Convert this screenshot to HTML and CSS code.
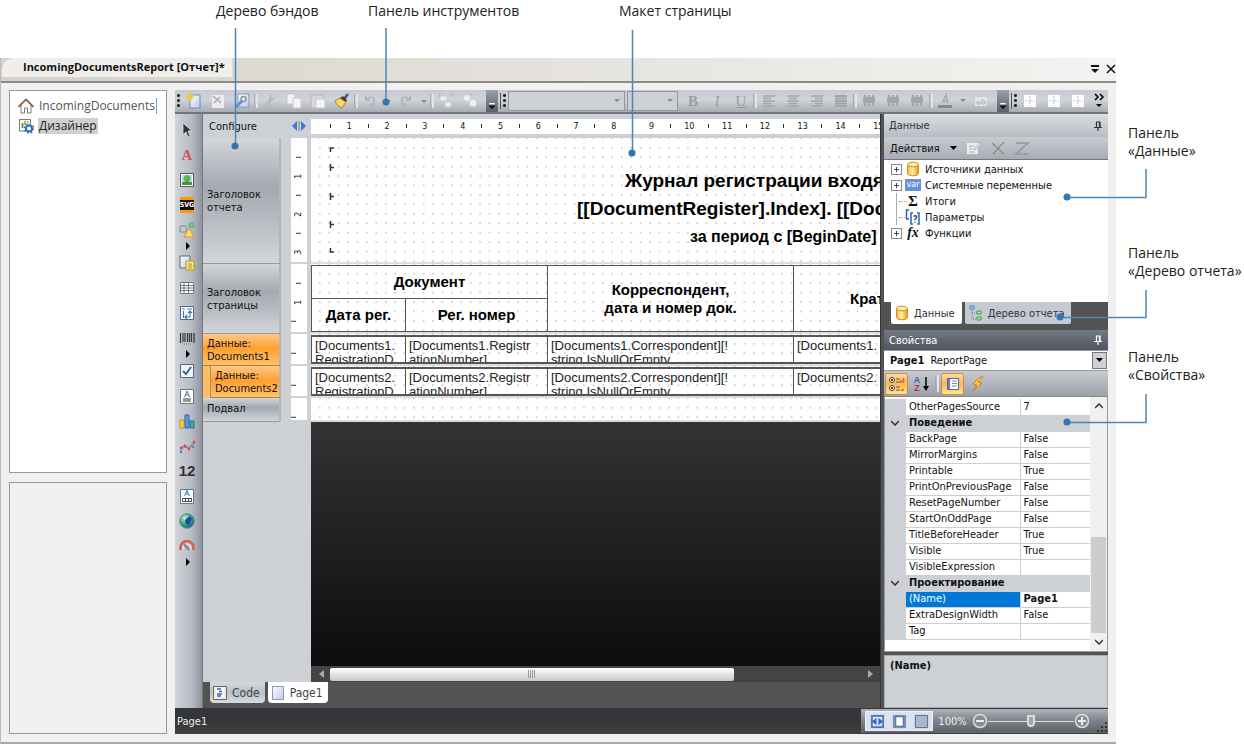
FILE: index.html
```html
<!DOCTYPE html>
<html lang="ru">
<head>
<meta charset="utf-8">
<title>IncomingDocumentsReport</title>
<link rel="stylesheet" href="styles.css">
</head>
<body>
<svg class="defs" aria-hidden="true">
  <defs>
    <linearGradient id="gold" x1="0" x2="1"><stop offset="0" stop-color="#f5b93a"/><stop offset=".45" stop-color="#fff0b8"/><stop offset="1" stop-color="#e59a10"/></linearGradient>
    <linearGradient id="sheet" x1="0" y1="0" x2="1" y2="1"><stop offset="0" stop-color="#fff"/><stop offset="1" stop-color="#b9c9ea"/></linearGradient>
    <radialGradient id="globe" cx=".35" cy=".3" r=".8"><stop offset="0" stop-color="#c8efd8"/><stop offset=".5" stop-color="#3fa876"/><stop offset="1" stop-color="#1c4c9c"/></radialGradient>
    <symbol id="db" viewBox="0 0 16 16"><path d="M2.500 3.500v9c0 3 11 3 11 0v-9z" fill="url(#gold)" stroke="#d8920c"/><ellipse cx="8" cy="3.500" rx="5.500" ry="2.300" fill="#ffe9a8" stroke="#d8920c"/></symbol>
    <symbol id="align" viewBox="0 0 16 16"><path d="M2 3h12M2 5.500h8M2 8h12M2 10.500h8M2 13h12" stroke="#a2a6ab" stroke-width="1.600"/></symbol>
    <symbol id="valign" viewBox="0 0 16 16"><path d="M2 4h12v6H2z" fill="#a4a8ad"/><path d="M4 2v11M8 2v11M12 2v11" stroke="#a4a8ad" stroke-width="2"/></symbol>
    <symbol id="cells" viewBox="0 0 16 16"><path d="M2 2h12v12H2z" fill="#fff"/><path d="M8 3v10M3 8h10" stroke="#c0c3c8" stroke-dasharray="2 1"/></symbol>
    <symbol id="pin" viewBox="0 0 10 10"><path d="M3 1h4v5M3.500 1v5M1 6.500h8M5 6.500V10M6.500 1v5" stroke="currentColor" fill="none" stroke-width="1.200"/></symbol>
  </defs>
</svg>

<div class="page">
  <header class="notes-top">
    <span class="note">Дерево бэндов</span><span class="note">Панель инструментов</span><span class="note">Макет страницы</span>
  </header>

  <div class="window">
    <div class="titlebar">
      <div class="doc-tab">IncomingDocumentsReport [Отчет]*</div>
      <div class="title-actions">
        <button aria-label="Список окон"><svg width="10" height="10"><path d="M1 2h8" stroke="#111" stroke-width="2"/><path d="M1 5h8L5 9z" fill="#111"/></svg></button>
        <button aria-label="Закрыть"><svg width="10" height="10"><path d="M1 1l8 8M9 1l-8 8" stroke="#111" stroke-width="1.500"/></svg></button>
      </div>
    </div>
    <div class="window-body">
      <aside class="side">
        <nav class="box nav">
          <a href="#doc" class="nav-item"><svg width="16" height="16" viewBox="0 0 16 16"><path d="M3 7v8h3.500v-5h3v5H13V7" fill="#fff" stroke="#777"/><path d="M.5 9L8 1.500 15.500 9" fill="none" stroke="#7a6030" stroke-width="1.700"/></svg><span class="editing">IncomingDocuments</span></a>
          <a href="#designer" class="nav-item"><svg width="16" height="16" viewBox="0 0 16 16"><path d="M8 13H1.500V1.500h11V5" fill="#fff" stroke="#777"/><path d="M4.500 10V5" stroke="#3a9c3a" stroke-width="1.800"/><path d="M7 7V3" stroke="#f09020" stroke-width="1.800"/><path d="M10 5V3" stroke="#c8b020" stroke-width="1.500"/><circle cx="11" cy="10.500" r="3" fill="#fff" stroke="#2a70b8" stroke-width="2"/><circle cx="11" cy="10.500" r="4.600" fill="none" stroke="#2a70b8" stroke-width="1.400" stroke-dasharray="1.800 1.800"/></svg><span class="current">Дизайнер</span></a>
        </nav>
        <div class="box empty"></div>
      </aside>

      <main class="designer">
        <div class="toolbar">
          <i class="grip"></i>
          <button aria-label="Создать"><svg viewBox="0 0 16 16"><path d="M4 2h10v13H4z" fill="url(#sheet)" stroke="#7088b8"/><path d="M4 0v8M0 4h8M1.500 1.500l5 5M6.500 1.500l-5 5" stroke="#f5cc30" stroke-width="1.500"/></svg></button>
          <button aria-label="Удалить страницу"><svg viewBox="0 0 16 16"><path d="M2 2h12v13H2z" fill="#ececec"/><path d="M3 3l8 7M10 4l-6 6" stroke="#aaa" stroke-width="1.500"/></svg></button>
          <button aria-label="Параметры страницы"><svg viewBox="0 0 16 16"><path d="M4 1h11v13H4z" fill="url(#sheet)" stroke="#8898b8"/><path d="M2 14l6-6" stroke="#6890d8" stroke-width="3"/><circle cx="9.500" cy="6" r="2.500" fill="#e8ecf4" stroke="#8a90a0" stroke-width="1.500"/></svg></button>
          <i class="sep"></i>
          <button aria-label="Вырезать"><svg viewBox="0 0 16 16"><path d="M9 2L7 10M12 5l-7 5" stroke="#b4b8bd" stroke-width="1.800"/><circle cx="5" cy="12" r="1.800" fill="none" stroke="#bbb"/><circle cx="9" cy="13" r="1.800" fill="none" stroke="#bbb"/></svg></button>
          <button aria-label="Копировать"><svg viewBox="0 0 16 16"><path d="M1 1h8v10H1z" fill="#f4f4f4" stroke="#c8c8c8"/><path d="M7 5h8v10H7z" fill="#f4f4f4" stroke="#c8c8c8"/></svg></button>
          <button aria-label="Вставить"><svg viewBox="0 0 16 16"><path d="M1 2h12v13H1z" fill="#d8d8d8" stroke="#b4b4b4"/><path d="M6 6h9v9H6z" fill="#f4f4f4" stroke="#c8c8c8"/></svg></button>
          <button aria-label="Формат по образцу"><svg viewBox="0 0 16 16"><path d="M10 6l4-5" stroke="#405090" stroke-width="2.500"/><path d="M1 8l5-3 6 4-4 6C5 14 2 11 1 8z" fill="#f6d860" stroke="#a88a28"/><path d="M6 5l6 4 1-2-4-4z" fill="#504028"/></svg></button>
          <i class="sep"></i>
          <button aria-label="Отменить"><svg viewBox="0 0 16 16"><path d="M4 3v4h4M4 7c4-5 10-2 8 2-1 2-3 3-4 4" fill="none" stroke="#b2b6bb" stroke-width="1.800"/></svg></button>
          <button class="narrow" aria-label="Список отмены"><svg viewBox="0 0 12 16"><path d="M3 7h6L6 10z" fill="#999"/></svg></button>
          <button aria-label="Повторить"><svg viewBox="0 0 16 16"><path d="M12 3v4H8M12 7C8 2 2 5 4 9c1 2 3 3 4 4" fill="none" stroke="#b2b6bb" stroke-width="1.800"/></svg></button>
          <button class="narrow" aria-label="Список повтора"><svg viewBox="0 0 12 16"><path d="M3 7h6L6 10z" fill="#888"/></svg></button>
          <i class="sep"></i>
          <button aria-label="Сгруппировать"><svg viewBox="0 0 16 16"><path d="M2 3h7v5H2zM7 9h6v5H7z" fill="#eee" stroke="#ccc"/><path d="M1 1h3M1 1v3M15 15h-3M15 15v-3M15 1h-3M15 1v3M1 15h3M1 15v-3" stroke="#b4b8bc"/></svg></button>
          <button aria-label="Разгруппировать"><svg viewBox="0 0 16 16"><circle cx="5" cy="5" r="3" fill="#eee"/><circle cx="11" cy="10" r="4" fill="#eee" stroke="#ccc"/><path d="M9 1h5M1 10v5" stroke="#b8bbc0" stroke-dasharray="2 1"/></svg></button>
          <button class="more" aria-label="Ещё"><svg viewBox="0 0 12 24"><path d="M3 15h6" stroke="#fff" stroke-width="1.500"/><path d="M2 17h8l-4 4z" fill="#111"/></svg></button>
          <i class="grip"></i>
          <span class="combo font"><select aria-label="Шрифт" disabled><option></option></select></span>
          <span class="combo size"><select aria-label="Размер" disabled><option></option></select></span>
          <button class="letter" aria-label="Полужирный"><b>B</b></button>
          <button class="letter" aria-label="Курсив"><em>I</em></button>
          <button class="letter" aria-label="Подчёркнутый"><u>U</u></button>
          <i class="sep"></i>
          <button aria-label="По левому краю"><svg><use href="#align"/></svg></button>
          <button aria-label="По центру"><svg viewBox="0 0 16 16"><path d="M2 3h12M4 5.500h8M2 8h12M4 10.500h8M2 13h12" stroke="#a2a6ab" stroke-width="1.600"/></svg></button>
          <button aria-label="По правому краю"><svg viewBox="0 0 16 16"><path d="M2 3h12M6 5.500h8M2 8h12M6 10.500h8M2 13h12" stroke="#a2a6ab" stroke-width="1.600"/></svg></button>
          <button aria-label="По ширине"><svg viewBox="0 0 16 16"><path d="M2 3h12M2 5.500h12M2 8h12M2 10.500h12M2 13h12" stroke="#a2a6ab" stroke-width="1.800"/></svg></button>
          <i class="sep"></i>
          <button aria-label="По верху"><svg><use href="#valign"/></svg></button>
          <button aria-label="По середине"><svg><use href="#valign"/></svg></button>
          <button aria-label="По низу"><svg><use href="#valign"/></svg></button>
          <i class="sep"></i>
          <button aria-label="Цвет текста"><svg viewBox="0 0 16 16"><path d="M5 10l4-8 2 8M6 8h5" fill="none" stroke="#a8acb0" stroke-width="1.500"/><path d="M1 13.500h14" stroke="#8a8a8a" stroke-width="3"/></svg></button>
          <button class="narrow" aria-label="Палитра"><svg viewBox="0 0 12 16"><path d="M3 6h6L6 9z" fill="#888"/></svg></button>
          <button aria-label="Цвет фона"><svg viewBox="0 0 16 16"><path d="M2 4h12v9H2z" fill="#e4e4e4"/><path d="M4 9h3v2H4zM9 6v5h3V8H9" fill="none" stroke="#b4b4b4"/></svg></button>
          <i class="fill"></i>
          <button class="more" aria-label="Ещё"><svg viewBox="0 0 12 24"><path d="M3 15h6" stroke="#fff" stroke-width="1.500"/><path d="M2 17h8l-4 4z" fill="#111"/></svg></button>
          <i class="grip"></i>
          <button aria-label="Все границы"><svg><use href="#cells"/></svg></button>
          <button aria-label="Внешние границы"><svg><use href="#cells"/></svg></button>
          <button aria-label="Без границ"><svg><use href="#cells"/></svg></button>
          <button class="last" aria-label="Другие кнопки"><svg viewBox="0 0 16 16"><path d="M4 1l3 3-3 3M9 1l3 3-3 3" fill="none" stroke="#000" stroke-width="1.500"/><path d="M5 11h6l-3 3z"/></svg></button>
        </div>

        <div class="workspace">
          <div class="rail">
            <button aria-label="Указатель"><svg viewBox="0 0 16 16"><path d="M4 1v12l3-3 2 5 2-1-2-5h4z" fill="#333" stroke="#eee" stroke-width=".7"/></svg></button>
            <button class="text-tool" aria-label="Текст">A</button>
            <button aria-label="Рисунок"><svg viewBox="0 0 16 16"><path d="M1.500 1.500h13v13h-13z" fill="#fff" stroke="#556"/><path d="M3 3h10v10H3z" fill="#bcdcf4"/><path d="M3 10h10v3H3z" fill="#3c9c3c"/><circle cx="8" cy="6.500" r="3.500" fill="#5cb44c"/><path d="M8 9v3" stroke="#864" stroke-width="1.500"/></svg></button>
            <button class="svg-tool" aria-label="SVG"><span>SVG</span></button>
            <button aria-label="Фигуры"><svg viewBox="0 0 16 16"><path d="M1 4h6v6H1z" fill="#c8ccd0" stroke="#888"/><circle cx="12.500" cy="3" r="2.500" fill="#7cc88c" stroke="#50a868"/><path d="M5 15l5-9 5 9z" fill="#fbd870" stroke="#d09c28"/></svg></button>
            <i class="flyout"></i>
            <button aria-label="Вложенный отчет"><svg viewBox="0 0 16 16"><path d="M1 1h10v12H1z" fill="url(#sheet)" stroke="#667"/><path d="M7 6h8v9H7z" fill="#ffe680" stroke="#b89428"/><path d="M9 9h4M9 11h4M9 13h4" stroke="#b89428"/></svg></button>
            <button aria-label="Таблица"><svg viewBox="0 0 16 16"><path d="M1.500 2.500h13v11h-13zM1.500 5.500h13M1.500 8h13M1.500 10.500h13M5 2.500v11M9.500 2.500v11" fill="#fff" stroke="#777"/></svg></button>
            <button aria-label="Матрица"><svg viewBox="0 0 16 16"><path d="M1.500 1.500h13v13h-13z" fill="#fff" stroke="#567"/><path d="M3 4h3M8 4h5M4.500 6v7M7 12h4V7M8 10l-2 2 2 2M9 8l2-2 2 2" fill="none" stroke="#3878b8" stroke-width="1.200"/></svg></button>
            <button aria-label="Штрих-код"><svg viewBox="0 0 16 16"><path d="M1.500 3v10M4 3v9M6 3v9M8.500 3v9M10.500 3v9M12.500 3v9M15 3v10" stroke="#333" stroke-width="1.200"/><path d="M3 14h10" stroke="#777" stroke-dasharray="1 1"/></svg></button>
            <i class="flyout"></i>
            <button aria-label="Флажок"><svg viewBox="0 0 16 16"><path d="M1.500 1.500h13v13h-13z" fill="#f4f6fa" stroke="#567"/><path d="M4 8l3 3 5-7" fill="none" stroke="#3468b0" stroke-width="2"/></svg></button>
            <button aria-label="Форматированный текст"><svg viewBox="0 0 16 16"><path d="M1.500 1.500h13v14h-13z" fill="#fff" stroke="#678"/><path d="M5.500 9L8 3l2.500 6M6.500 7h3" fill="none" stroke="#3878b8"/><path d="M4 10h8v4H4z" fill="#999"/></svg></button>
            <button aria-label="Диаграмма"><svg viewBox="0 0 16 16"><path d="M1 7h4v8H1z" fill="#f8d040" stroke="#c09820"/><path d="M6 2h4v13H6z" fill="#5898e0" stroke="#2860b0"/><path d="M11 8h4v7h-4z" fill="#50b070" stroke="#2868a0"/></svg></button>
            <button aria-label="Спарклайн"><svg viewBox="0 0 16 16"><path d="M1 10l4-2 5 3 5-7" fill="none" stroke="#e04040"/><path d="M1 14l4-5 5 0 5-1" fill="none" stroke="#6090e0"/><path d="M1 10h2M5 8h2M9 11h2M14 4h2" stroke="#e04040" stroke-width="2.500"/><path d="M1 14h2M13 9h2" stroke="#5080d8" stroke-width="2.500"/></svg></button>
            <button class="zip-tool" aria-label="Почтовый индекс">12</button>
            <button aria-label="Текст по ячейкам"><svg viewBox="0 0 16 16"><path d="M1.500 1.500h13v14h-13z" fill="#fff" stroke="#678"/><path d="M5.500 8L8 2.500 10.500 8M6.500 6h3" fill="none" stroke="#3878b8"/><path d="M3.500 10.500h9v3h-9zM6.500 10v4M9.500 10v4" fill="none" stroke="#444"/></svg></button>
            <button aria-label="Карта"><svg viewBox="0 0 16 16"><circle cx="8" cy="8" r="7.200" fill="url(#globe)" stroke="#488"/><path d="M7 6l4-3 2 3-2 3v3l-4-1-1-3z" fill="#1c48b0"/></svg></button>
            <button aria-label="Шкала"><svg viewBox="0 0 16 16"><path d="M1.500 12V9.500a6.500 6.500 0 0 1 13 0V12" fill="none" stroke="#d06050" stroke-width="2.500"/><path d="M4 12v-2a4 4 0 0 1 8 0v2" fill="none" stroke="#eee"/><path d="M5 6l5 6" stroke="#888" stroke-width="2.500"/></svg></button>
            <i class="flyout"></i>
          </div>

          <div class="editor">
            <div class="sheet-area">
              <div class="band-row ruler-row">
                <button class="configure">Configure</button>
                <button class="resize" aria-label="Ширина дерева"><svg width="16" height="12"><path d="M6 1v10L1 6z" fill="#3c78e0"/><path d="M10 1v10l5-5z" fill="#3c78e0"/><path d="M8 1v10" stroke="#999" stroke-width="1.500"/></svg></button>
                <div class="hruler"><span><i></i>1</span><span><i></i>2</span><span><i></i>3</span><span><i></i>4</span><span><i></i>5</span><span><i></i>6</span><span><i></i>7</span><span><i></i>8</span><span><i></i>9</span><span><i></i>10</span><span><i></i>11</span><span><i></i>12</span><span><i></i>13</span><span><i></i>14</span><span><i></i>15</span></div>
              </div>
              <div class="band-row title-band">
                <div class="band">Заголовок<br>отчета</div>
                <div class="vruler"><span><i></i>1</span><span><i></i>2</span><span><i></i>3</span></div>
                <div class="canvas report-title">
                  <svg class="marks" width="6" height="110" viewBox="0 0 6 110"><path d="M1.500 6V2H5M1.500 18v7M2 21.500h3M1.500 47v7M2 50.500h3M1.500 75v7M2 78.500h3M1.500 102v4H5" fill="none" stroke="#333" stroke-width="1.500"/></svg>
                  <div class="title-lines">
                  <p class="line-1">Журнал регистрации входящих</p>
                  <p class="line-2">[[DocumentRegister].Index]. [[DocumentRegister]</p>
                  <p class="line-3">за период с [BeginDate]</p>
                  </div>
                </div>
              </div>
              <div class="band-row header-band">
                <div class="band">Заголовок<br>страницы</div>
                <div class="vruler"><span><i></i>1</span><span><i></i></span></div>
                <div class="canvas">
                  <table class="report head"><colgroup><col class="c1"><col class="c2"><col class="c3"><col></colgroup>
                    <tr><th colspan="2">Документ</th><th rowspan="2">Корреспондент,<br>дата и номер док.</th><th rowspan="2" class="cut">Краткое</th></tr>
                    <tr><th>Дата рег.</th><th>Рег. номер</th></tr>
                  </table>
                </div>
              </div>
              <div class="band-row data-band">
                <div class="band orange">Данные:<br>Documents1</div>
                <div class="vruler"><span><i></i></span></div>
                <div class="canvas">
                  <table class="report data"><colgroup><col class="c1"><col class="c2"><col class="c3"><col></colgroup>
                    <tr><td><div>[Documents1.<br>RegistrationD</div></td><td><div>[Documents1.Registr<br>ationNumber]</div></td><td><div>[Documents1.Correspondent][!<br>string.IsNullOrEmpty</div></td><td><div>[Documents1.</div></td></tr>
                  </table>
                </div>
              </div>
              <div class="band-row data-band nested">
                <div class="band-indent"><div class="band orange">Данные:<br>Documents2</div></div>
                <div class="vruler"><span><i></i></span></div>
                <div class="canvas">
                  <table class="report data"><colgroup><col class="c1"><col class="c2"><col class="c3"><col></colgroup>
                    <tr><td><div>[Documents2.<br>RegistrationD</div></td><td><div>[Documents2.Registr<br>ationNumber]</div></td><td><div>[Documents2.Correspondent][!<br>string.IsNullOrEmpty</div></td><td><div>[Documents2.</div></td></tr>
                  </table>
                </div>
              </div>
              <div class="band-row footer-band">
                <div class="band">Подвал</div>
                <div class="vruler"><span><i></i></span></div>
                <div class="canvas"></div>
              </div>
              <div class="void-row">
                <div class="void">
                  <div class="hscroll">
                    <button aria-label="Влево"><svg width="8" height="10"><path d="M7 1v8L2 5z" fill="#aaa"/></svg></button>
                    <div class="track"><div class="thumb"><i></i></div></div>
                    <button aria-label="Вправо"><svg width="8" height="10"><path d="M1 1v8l5-4z" fill="#aaa"/></svg></button>
                  </div>
                </div>
              </div>
            </div>
            <div class="page-tabs">
              <button class="ptab"><svg width="16" height="16" viewBox="0 0 16 16"><path d="M1.500 1.500h13v13h-13z" fill="#f4ecd8" stroke="#666"/><path d="M4 3h8v9H4z" fill="#fff"/><path d="M5 4h4M7 6.500h3M5 9h5M5 11h4" stroke="#3858d8" stroke-width="1.300"/></svg>Code</button>
              <button class="ptab active"><svg width="16" height="16" viewBox="0 0 16 16"><path d="M2.500 1.500h11v13h-11z" fill="url(#sheet)" stroke="#8898b8"/></svg>Page1</button>
            </div>
          </div>

          <aside class="dock">
            <div class="panel-head light"><span>Данные</span><svg width="10" height="10"><use href="#pin"/></svg></div>
            <div class="panel-tools">
              <button class="menu">Действия<svg width="8" height="5"><path d="M0 0h7L3.500 4z"/></svg></button>
              <button aria-label="Изменить"><svg width="16" height="16"><path d="M1 3h11v11H1z" fill="#eee"/><path d="M3 6h5M3 9h4M3 12h6M8 9l6-7 1 2-6 6z" fill="#f8f8f8" stroke="#aaa"/></svg></button>
              <button aria-label="Удалить"><svg width="16" height="16"><path d="M2 3l12 11M14 2L3 14" stroke="#8c8c8c" stroke-width="1.300"/></svg></button>
              <button aria-label="Просмотр"><svg width="16" height="16"><path d="M2 3h12L2 14h12" fill="none" stroke="#94979b" stroke-width="1.500"/></svg></button>
            </div>
            <ul class="tree">
              <li><i class="box-plus"></i><svg width="16" height="16"><use href="#db"/></svg>Источники данных</li>
              <li><i class="box-plus"></i><span class="var">var</span>Системные переменные</li>
              <li><i class="leaf"></i><span class="sigma">Σ</span>Итоги</li>
              <li><i class="leaf"></i><svg width="16" height="16"><path d="M4 1H1.500v9H4M8 4H6v11h2M12 4h2v11h-2" fill="none" stroke="#2868b0" stroke-width="1.500"/><path d="M8.500 7h3v2l-1.500 1v1.500M10 13v1" fill="none" stroke="#224a80" stroke-width="1.300"/></svg>Параметры</li>
              <li><i class="box-plus"></i><span class="fx">fx</span>Функции</li>
            </ul>
            <div class="dock-tabs">
              <button class="dtab active"><svg width="16" height="16"><use href="#db"/></svg>Данные</button>
              <button class="dtab"><svg width="16" height="16"><path d="M4 5v9h5M4 8h5" fill="none" stroke="#777" stroke-dasharray="1 1"/><path d="M2 1h4v3H2z" fill="#a8c8f8" stroke="#4880d0"/><path d="M9 6h4v3H9zM9 12h4v3H9z" fill="#b8e8b0" stroke="#38a038"/></svg>Дерево отчета</button>
            </div>
            <div class="panel-head dark"><span>Свойства</span><svg width="10" height="10"><use href="#pin"/></svg></div>
            <button class="object"><span><b>Page1</b> ReportPage</span><i><svg width="8" height="5"><path d="M0 0h7L3.500 4z"/></svg></i></button>
            <div class="prop-tools">
              <button class="on" aria-label="По категориям"><svg width="18" height="16"><circle cx="4" cy="4" r="2.500" fill="#fff" stroke="#345"/><circle cx="4" cy="12" r="2.500" fill="#fff" stroke="#345"/><circle cx="4" cy="4" r="1"/><circle cx="4" cy="12" r="1"/><path d="M8 3h4M8 6h4M8 11h4M8 14h4M13 4v3M15.500 2v5M13 14h3" stroke="#a07840" stroke-width="1.500"/></svg></button>
              <button class="az" aria-label="По алфавиту"><span><b>A</b><b>Z</b></span><svg width="6" height="14"><path d="M3 0v11" stroke="#000" stroke-width="1.500"/><path d="M0 9h6l-3 5z"/></svg></button>
              <i class="sep"></i>
              <button class="on" aria-label="Свойства"><svg width="16" height="16"><path d="M2.500 2.500h11v11h-11z" fill="#fff" stroke="#4868a8"/><path d="M4 3v10" stroke="#6080c0" stroke-width="2"/><path d="M7 5h5M7 7.500h5M7 10h5" stroke="#888"/></svg></button>
              <button aria-label="События"><svg width="16" height="16"><path d="M10 1L3 8l4 1-4 6 9-8-4-1 5-5z" fill="#ffc830" stroke="#d86818" stroke-width=".8"/></svg></button>
            </div>
            <div class="props-wrap">
              <table class="props">
                <colgroup><col class="gutter"><col class="name"><col></colgroup>
                <tr><td></td><td>OtherPagesSource</td><td>7</td></tr>
                <tr class="cat"><td><svg width="8" height="6"><path d="M0 1l4 4 4-4" fill="none" stroke="#333" stroke-width="1.500"/></svg></td><th colspan="2">Поведение</th></tr>
                <tr><td></td><td>BackPage</td><td>False</td></tr>
                <tr><td></td><td>MirrorMargins</td><td>False</td></tr>
                <tr><td></td><td>Printable</td><td>True</td></tr>
                <tr><td></td><td>PrintOnPreviousPage</td><td>False</td></tr>
                <tr><td></td><td>ResetPageNumber</td><td>False</td></tr>
                <tr><td></td><td>StartOnOddPage</td><td>False</td></tr>
                <tr><td></td><td>TitleBeforeHeader</td><td>True</td></tr>
                <tr><td></td><td>Visible</td><td>True</td></tr>
                <tr><td></td><td>VisibleExpression</td><td></td></tr>
                <tr class="cat"><td><svg width="8" height="6"><path d="M0 1l4 4 4-4" fill="none" stroke="#333" stroke-width="1.500"/></svg></td><th colspan="2">Проектирование</th></tr>
                <tr class="selected"><td></td><td>(Name)</td><td>Page1</td></tr>
                <tr><td></td><td>ExtraDesignWidth</td><td>False</td></tr>
                <tr><td></td><td>Tag</td><td></td></tr>
              </table>
              <div class="vscroll">
                <button aria-label="Вверх"><svg width="8" height="6"><path d="M0 5l4-4 4 4" fill="none" stroke="#333" stroke-width="1.500"/></svg></button>
                <div class="vtrack"><div class="vthumb"></div></div>
                <button aria-label="Вниз"><svg width="8" height="6"><path d="M0 1l4 4 4-4" fill="none" stroke="#333" stroke-width="1.500"/></svg></button>
              </div>
            </div>
            <div class="hint">(Name)</div>
          </aside>
        </div>

        <footer class="status">
          <span class="status-text">Page1</span>
          <div class="zoom">
            <div class="zoom-modes">
              <button aria-label="По ширине"><svg viewBox="0 0 16 16"><path d="M1 1h14v14H1z" fill="#5078b8"/><path d="M3 3h10v10H3z" fill="#dce8fa"/><path d="M7 4v8L2 8zM9 4v8l5-4z" fill="#3868b8"/></svg></button>
              <button aria-label="Страница целиком"><svg viewBox="0 0 16 16"><path d="M1 1h14v14H1z" fill="#7890b8"/><path d="M4 3h8v10H4z" fill="#fff" stroke="#4868a0"/></svg></button>
              <button aria-label="Масштаб 100%"><svg viewBox="0 0 16 16"><path d="M1.500 1.500h13v13h-13z" fill="#a8b8d0" stroke="#556888"/></svg></button>
            </div>
            <span class="percent">100%</span>
            <button class="round" aria-label="Уменьшить"><svg width="16" height="16"><circle cx="8" cy="8" r="6.500" fill="#888c90" stroke="#ddd" stroke-width="1.500"/><path d="M4 8h8" stroke="#eee" stroke-width="2"/></svg></button>
            <input type="range" aria-label="Масштаб" min="0" max="100" value="50">
            <button class="round" aria-label="Увеличить"><svg width="16" height="16"><circle cx="8" cy="8" r="6.500" fill="#888c90" stroke="#ddd" stroke-width="1.500"/><path d="M4 8h8M8 4v8" stroke="#eee" stroke-width="2"/></svg></button>
            <svg class="sizer" width="12" height="12"><path d="M9 1h2v2H9zM9 5h2v2H9zM5 5h2v2H5zM1 9h2v2H1zM5 9h2v2H5zM9 9h2v2H9z" fill="#333"/></svg>
          </div>
        </footer>
      </main>
    </div>
  </div>

  <aside class="notes-side">
    <p class="note">Панель<br>«Данные»</p>
    <p class="note">Панель<br>«Дерево отчета»</p>
    <p class="note">Панель<br>«Свойства»</p>
  </aside>

  <svg class="callouts" width="1244" height="746" aria-hidden="true">
    <path d="M235.500 28v118M386 28v74M632.500 30v123M1067 197.500h79V169M1060 317.500h86V290M1067 422.500h79V394" fill="none" stroke="#4a86b8" stroke-width="1.500"/>
    <g fill="#3674ae"><circle cx="235" cy="146" r="3.500"/><circle cx="386" cy="102" r="3.500"/><circle cx="632" cy="153" r="3.500"/><circle cx="1067" cy="197" r="3.500"/><circle cx="1060" cy="317" r="3.500"/><circle cx="1067" cy="422" r="3.500"/></g>
  </svg>
</div>
</body>
</html>
```
FILE: styles.css
```css
* { box-sizing: border-box; }

:root {
  --ui: "DejaVu Sans Condensed", "DejaVu Sans", sans-serif;
  --segoe: "Open Sans", "Noto Sans", sans-serif;
  --silver: #cdd0d5;
  --dark: #535353;
}

body { margin: 0; background: #fff; font: 11px/13px var(--ui); color: #111; }
button { margin: 0; padding: 0; border: 0; background: none; font: inherit; color: inherit; }
p { margin: 0; }
svg { display: block; flex: none; }
.defs { position: absolute; width: 0; height: 0; }

.page {
  position: relative;
  display: grid;
  grid-template: 58px 1fr / 1fr 128px;
  min-height: 100vh;
  padding-bottom: 2px;
}
.callouts { position: absolute; left: 0; top: 0; pointer-events: none; }
.note { font: 14px/18px var(--segoe); color: #222; white-space: nowrap; }
.notes-top { grid-column: 1 / 3; display: flex; padding: 2px 0 0 216px; }
.notes-top .note:nth-child(1) { width: 152px; }
.notes-top .note:nth-child(2) { width: 251px; }
.notes-side { display: flex; flex-direction: column; gap: 84px; padding: 66px 0 0 12px; }
.notes-side .note:nth-child(3) { margin-top: -16px; }

/* Window frame */
.window { display: flex; flex-direction: column; min-width: 0; background: #f0f0f0; border-bottom: 2px solid #a8a8a8; border-left: 1px solid #bbb; }
.titlebar {
  display: flex; justify-content: space-between; align-items: flex-end;
  height: 25px; padding: 0 0 4px 1px;
  background: linear-gradient(90deg, #d6d2ca, #f4f3f1);
  border-bottom: 2px solid #8a8a8a;
}
.doc-tab {
  height: 19px; width: 230px; padding: 0 0 0 21px;
  font: bold 11px/17px var(--segoe); white-space: nowrap;
  background: #f0eeeb; border-radius: 12px 3px 0 0;
}
.title-actions { display: flex; gap: 6px; padding-bottom: 3px; }
.window-body { flex: 1; display: flex; gap: 8px; padding: 7px 8px 8px; }

.side { width: 158px; display: grid; grid-template-rows: 384fr 252fr; gap: 9px; }
.box { border: 1px solid #999; }
.nav { background: #fff; padding: 5px 8px; }
.nav-item { display: flex; align-items: center; gap: 4px; height: 20px; font: 12px/16px var(--segoe); color: #555; text-decoration: none; }
.nav-item span { padding: 0 1px; }
.editing { border-right: 1px solid #68a0d8; }
.current { background: #d0d0d0; color: #222; }

/* Designer */
.designer { flex: 1; min-width: 0; display: flex; flex-direction: column; background: var(--dark); }
.toolbar {
  display: flex; align-items: stretch; height: 24px; overflow: hidden;
  background: linear-gradient(#c6c9cf, #d0d3d8 45%, #a8acb4);
  border-bottom: 2px solid #70767f;
}
.toolbar button { width: 24px; display: grid; place-items: center; flex: none; }
.toolbar button svg { width: 16px; height: 16px; }
.toolbar .narrow, .toolbar .narrow svg { width: 12px; }
.toolbar .last { width: 18px; }
.toolbar .more { width: 12px; margin-left: 4px; background: linear-gradient(#9aa0ab, #5a616d); }
.toolbar .more svg { width: 12px; height: 22px; }
.fill { flex: 1; }
.grip { width: 7px; flex: none; margin: 3px 0; background: radial-gradient(circle, #222 1px, transparent 2px) 0 0 / 7px 5px; }
.toolbar .more + .grip { margin-left: 2px; border-left: 1px solid #555; }
.sep { width: 4px; flex: none; margin: 4px 0; border-left: 1px solid #aaa; border-right: 2px solid #e4e4e4; }
.combo { position: relative; margin: 1px 1px; }
.combo select { appearance: none; width: 100%; height: 20px; border: 1px solid #94989d; border-radius: 0; background: #cdd0d4; opacity: 1; }
.combo::after { content: ""; position: absolute; right: 5px; top: 8px; border: 3px solid transparent; border-top-color: #888; }
.combo.font { width: 120px; }
.combo.size { width: 52px; margin-right: 3px; }
.letter { font: 15px/16px "Liberation Serif", serif; color: #999da2; }

.workspace { flex: 1; display: flex; min-height: 0; }
.rail {
  width: 28px; flex: none; padding-top: 3px;
  display: flex; flex-direction: column;
  background: linear-gradient(90deg, #d0d3d8, #b8bcc4 60%, #8e94a0);
  border-right: 1px solid #777;
}
.rail button { height: 25px; padding-right: 3px; display: grid; place-items: center; }
.rail button svg { width: 16px; height: 16px; }
.flyout { height: 8px; width: 8px; margin-left: 11px; border: 4px solid transparent; border-left-color: #000; border-right-width: 0; }
.text-tool { font: bold 15px/16px "Liberation Serif", serif; color: #d85050; }
.svg-tool span { border: 1px solid #ff9900; border-width: 3px 0; background: #111; font: bold 7px/10px "DejaVu Sans Condensed", sans-serif; color: #fff; }
.zip-tool { font: bold 15px/16px "Liberation Sans", sans-serif; color: #333; }

.editor { flex: 1; min-width: 0; display: flex; flex-direction: column; border-right: 1px solid #333; }
.sheet-area { flex: 1; display: flex; flex-direction: column; background: var(--silver); }
.band-row { display: grid; grid-template-columns: 78px 10px 16px 4px minmax(0, 1fr); }
.band-row > :nth-child(2) { grid-column: 3; }
.band-row > :nth-child(3) { grid-column: 5; }
.ruler-row { height: 24px; align-items: center; }
.configure { text-align: left; padding-left: 6px; }
.hruler { display: flex; overflow: hidden; height: 15px; padding-left: 10px; background: #fff; font: 8px/15px "DejaVu Sans", sans-serif; }
.hruler span { flex: none; width: 1cm; display: grid; grid-template-columns: 1fr 1fr; place-items: center; }
.hruler i { width: 1px; height: 4px; background: #333; }
.vruler { height: calc(100% - 2px); overflow: hidden; padding-top: 10px; background: #fff; font: 8px/15px "DejaVu Sans", sans-serif; }
.vruler span { height: 1cm; display: grid; place-items: center; writing-mode: vertical-rl; grid-template: none / 1fr 1fr; transform: rotate(180deg); }
.vruler i { width: 5px; height: 1px; background: #333; grid-column: 2; grid-row: 1; }

.band {
  display: flex; align-items: center; padding-left: 4px;
  background: linear-gradient(#d4d6da, #a4a8b0 40%, #d2d5d9);
  border-right: 2px solid #b4b6ba; border-bottom: 1px solid #999;
}
.band.orange { background: linear-gradient(#ffc987, #ffa030 45%, #ffc26a); border-bottom-color: #b08040; }
.band-indent { display: grid; padding-left: 7px; background: #ffbc60; }
.band-indent .band { border-left: 1px solid #a09080; }
.title-band { height: 126px; }
.header-band { height: 70px; }
.data-band { height: 32px; }
.footer-band { height: 24px; }
.footer-band .band { align-items: flex-start; padding-top: 4px; }

.canvas {
  overflow: hidden;
  background: radial-gradient(circle, #d4d4d4 1px, transparent 1px) 4px 5px / 0.25cm 0.25cm #fff;
  border-bottom: 2px solid #ddd;
}
.report-title { display: flex; padding: 8px 0 0 18px; font: bold 16px/28px "Liberation Sans", sans-serif; white-space: nowrap; color: #000; }
.title-lines { padding-top: 21px; }
.line-1 { font-size: 19px; padding-left: 290px; }
.line-2 { font-size: 19px; padding-left: 242px; }
.line-3 { padding-left: 355px; }

.report { width: 100%; table-layout: fixed; border-collapse: collapse; font: 13px/14px "Liberation Sans", sans-serif; color: #222; }
.report .c1 { width: 94px; }
.report .c2 { width: 142px; }
.report .c3 { width: 246px; }
.report th, .report td { border: 1px solid #555; border-right-width: 0; padding: 0; }
.head { margin-top: 1px; }
.head th { height: 33px; font-size: 15px; line-height: 18px; color: #000; }
.head .cut { text-align: left; padding-left: 56px; }
.data { margin-top: 1px; white-space: nowrap; }
.report.data td { border-width: 2px 0 2px 1px; vertical-align: top; }
.data td > div { height: 25px; overflow: hidden; padding: 2px 0 0 3px; }

.void-row { flex: 1; display: flex; padding-left: 108px; }
.void { flex: 1; display: flex; align-items: flex-end; background: linear-gradient(#333, #0c0c0c 95%); }
.hscroll { flex: 1; display: flex; align-items: center; height: 16px; background: #444; }
.hscroll button { width: 19px; display: grid; place-items: center; }
.track { flex: 1; }
.thumb { width: 76%; height: 13px; border-radius: 2px; background: linear-gradient(#fff, #c8c8c8); display: grid; place-items: center; }
.thumb i { width: 8px; height: 8px; background: repeating-linear-gradient(90deg, #999 0 1px, transparent 1px 2px); }

.page-tabs { height: 26px; display: flex; gap: 3px; padding-left: 7px; }
.ptab { display: flex; align-items: center; gap: 4px; height: 21px; padding: 0 5px 0 2px; font: 12px/16px var(--ui); color: #444; background: linear-gradient(#d8dadd, #b8bfca 50%, #d8dce0); border-radius: 0 0 4px 4px; }
.ptab.active { background: #fff; }

/* Right dock */
.dock { width: 227px; flex: none; padding-left: 3px; display: flex; flex-direction: column; }
.panel-head { display: flex; justify-content: space-between; align-items: center; padding: 0 5px; }
.panel-head.light { height: 23px; background: linear-gradient(#dcdee2, #b8bcc4); color: #334; }
.panel-head.dark { height: 20px; background: linear-gradient(#747a85, #50565f); color: #fff; }
.panel-tools { height: 23px; display: flex; align-items: center; gap: 8px; padding-left: 6px; background: linear-gradient(#c8cbd0, #a8adb5); border-bottom: 1px solid #70767f; }
.menu { display: flex; align-items: center; gap: 10px; }
.tree { flex: 1; min-height: 142px; margin: 0; padding: 1px 0 0 7px; list-style: none; background: #fff; }
.tree li { display: flex; align-items: center; gap: 4px; height: 16px; white-space: nowrap; }
.tree svg, .tree span { width: 16px; }
.box-plus, .leaf { width: 10px; height: 16px; flex: none; display: grid; place-items: center; }
.box-plus::before { content: ""; width: 9px; height: 9px; border: 1px solid #889; background: linear-gradient(#346, #346) center / 5px 1px no-repeat, linear-gradient(#346, #346) center / 1px 5px no-repeat, #fff; }
.leaf { background: linear-gradient(90deg, #aaa 1px, transparent 1px) 5px 0 / 5px 100% no-repeat; }
.leaf::before { content: ""; width: 8px; margin-left: 8px; border-top: 1px dotted #999; }
.tree .var { background: #6890d8; color: #fff; font-size: 9px; line-height: 11px; height: 12px; text-align: center; }
.tree .sigma { font: bold 15px/16px "Liberation Serif", serif; text-align: center; }
.tree .fx { font: italic bold 14px/16px "Liberation Serif", serif; text-align: center; }
.dock-tabs { height: 28px; display: flex; align-items: flex-start; gap: 3px; padding-left: 7px; }
.dtab { display: flex; align-items: center; gap: 4px; height: 22px; padding: 0 7px 0 3px; background: #c4c9d2; color: #334; border-radius: 0 0 2px 2px; white-space: nowrap; }
.dtab.active { background: #fff; }
.object { display: flex; align-items: center; justify-content: space-between; height: 21px; padding: 0 1px 0 6px; background: #fff; text-align: left; border: 1px solid #999; border-width: 1px 0; }
.object b { margin-right: 3px; }
.object i { width: 15px; height: 17px; display: grid; place-items: center; background: var(--silver); border: 1px solid #777; }
.prop-tools { height: 26px; display: flex; align-items: center; gap: 2px; padding: 0 1px; background: linear-gradient(#c8cbd0, #9ca1aa); border-bottom: 1px solid #888; }
.prop-tools button { width: 23px; height: 22px; display: grid; place-items: center; }
.prop-tools .on { background: linear-gradient(#ffd9a0, #ffb850 50%, #ffe48c); border: 1px solid #c09050; border-radius: 2px; }
.prop-tools .az { display: flex; justify-content: center; align-items: center; gap: 3px; }
.az b { display: block; font: bold 9px/8px "Liberation Sans", sans-serif; color: #3868b0; }
.az b + b { color: #b03838; }
.prop-tools .sep { align-self: stretch; }
.props-wrap { display: flex; height: 255px; border: 1px solid #999; border-top: 0; background: #fff; }
.props { flex: 1; align-self: flex-start; table-layout: fixed; border-collapse: collapse; margin-top: 2px; }
.props .gutter { width: 21px; }
.props .name { width: 114px; }
.props td, .props th { height: 16px; padding: 0 0 0 3px; line-height: 14px; text-align: left; white-space: nowrap; border-bottom: 1px solid #ccced2; }
.props td:nth-child(1), .props .cat > * { background: var(--silver); }
.props td:nth-child(1) { padding-left: 6px; }
.props td:nth-child(3) { border-left: 1px solid #ccced2; }
.selected td:nth-child(2) { background: #0078d7; color: #fff; }
.selected td:nth-child(3) { font-weight: bold; }
.vscroll { width: 17px; display: flex; flex-direction: column; background: #f0f0f0; }
.vscroll button { height: 18px; display: grid; place-items: center; }
.vtrack { flex: 1; display: flex; align-items: flex-end; }
.vthumb { flex: 1; height: 44%; margin: 0 1px; background: #cdcdcd; }
.hint { height: 53px; margin-top: 3px; padding: 3px 5px; background: var(--silver); border: 1px solid #aaa; font-weight: bold; }

/* Status bar */
.status { height: 26px; display: flex; justify-content: space-between; align-items: center; background: linear-gradient(#35363c 40%, #323432 41%, #404040); color: #eee; }
.status-text { padding-left: 2px; }
.zoom { width: 247px; height: 24px; display: flex; align-items: center; padding-left: 4px; background: linear-gradient(#aeb3ba, #7c828b 50%, #5c6168); }
.zoom-modes { display: flex; height: 20px; border: 1px solid #eef; background: #dce2ec; }
.zoom-modes button { width: 22px; display: grid; place-items: center; }
.zoom-modes svg { width: 15px; height: 15px; }
.percent { width: 40px; text-align: center; }
.zoom input { appearance: none; width: 86px; height: 16px; margin: 0; background: linear-gradient(#ddd, #ddd) center / 100% 1px no-repeat; }
.zoom input::-webkit-slider-thumb { appearance: none; width: 8px; height: 12px; background: #a0a4a8; border: 2px solid #ddd; border-radius: 0 0 4px 4px; }
.sizer { align-self: flex-end; margin-left: 6px; }
```
